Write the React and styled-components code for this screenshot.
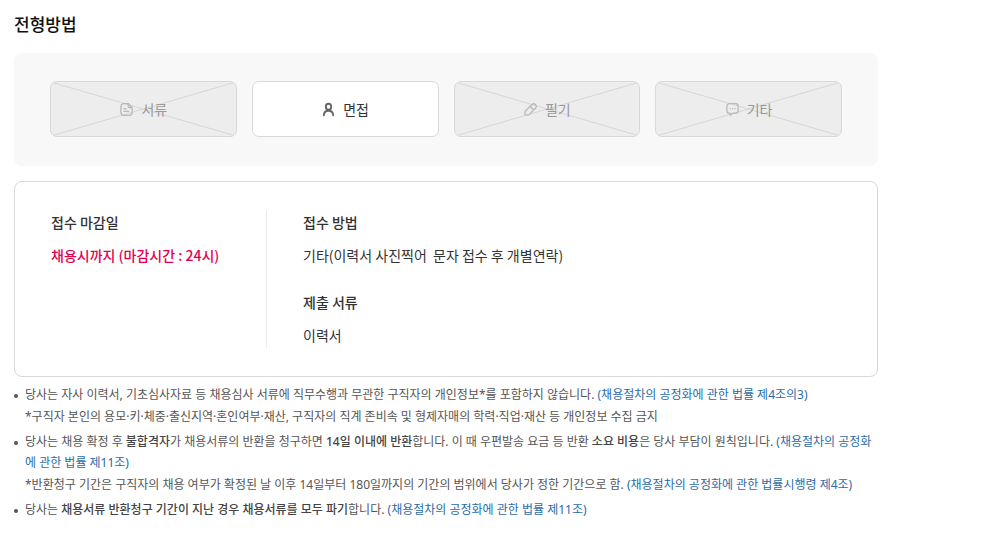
import React from "react";
import styled, { createGlobalStyle } from "styled-components";

const GlobalStyle = createGlobalStyle`
  *, *::before, *::after { box-sizing: border-box; }
  body {
    margin: 0;
    background: #fff;
    color: #333;
    font-family: "Noto Sans CJK KR", "Noto Sans", sans-serif;
    font-size: 14px;
  }
  h2, h3, p, ul { margin: 0; padding: 0; }
  ul { list-style: none; }
`;

const Section = styled.section`
  padding: 12px 108px 0 14px;
`;

const Title = styled.h2`
  margin-bottom: 17px;
  font-size: 17px;
  font-weight: 500;
  line-height: 24px;
  color: #111;
`;

const StepList = styled.ul`
  display: grid;
  grid-template-columns: repeat(4, 1fr);
  gap: 15px;
  padding: 28px 36px 29px;
  border-radius: 8px;
  background: #f8f8f8;
`;

const Step = styled.li`
  position: relative;
  display: flex;
  align-items: center;
  justify-content: center;
  gap: 7px;
  height: 56px;
  overflow: hidden;
  border: 1px solid ${({ $active }) => ($active ? "#d9d9d9" : "#d8d8d8")};
  border-radius: 7px;
  background: ${({ $active }) => ($active ? "#fff" : "#ededed")};
  color: ${({ $active }) => ($active ? "#333" : "#999")};
`;

const Cross = styled.svg`
  position: absolute;
  inset: 0;
  width: 100%;
  height: 100%;
  stroke: #d6d6d6;
`;

const Icon = styled.svg`
  position: relative;
  flex: none;
  width: 15px;
  height: 15px;
  fill: none;
  stroke: ${({ $active }) => ($active ? "#666" : "#b9b9b9")};
  stroke-width: ${({ $active }) => ($active ? 2 : 1.4)};
  stroke-linecap: round;
  stroke-linejoin: round;
`;

const StepLabel = styled.span`
  position: relative;
  line-height: 20px;
`;

const InfoBox = styled.div`
  display: flex;
  margin-top: 15px;
  padding: 28px 36px;
  border: 1px solid #d9d9d9;
  border-radius: 8px;
`;

const InfoColumn = styled.div`
  display: flex;
  flex-direction: column;
  gap: 22px;

  &:first-child {
    flex: 0 0 216px;
    border-right: 1px solid #ebebeb;
  }

  &:last-child {
    flex: 1;
    padding-left: 36px;
  }
`;

const InfoTitle = styled.h3`
  margin-bottom: 8px;
  font-size: 14px;
  font-weight: 500;
  line-height: 25px;
`;

const InfoText = styled.p`
  font-size: 14px;
  font-weight: ${({ $deadline }) => ($deadline ? 500 : 400)};
  line-height: 25px;
  white-space: pre-wrap;
  color: ${({ $deadline }) => ($deadline ? "#e3004f" : "#333")};
`;

const Notes = styled.ul`
  display: flex;
  flex-direction: column;
  gap: 4px;
  margin-top: 7px;
  font-family: "Noto Sans", "Noto Sans CJK KR", sans-serif;
  font-size: 12px;
  line-height: 21px;
  color: #555;
`;

const Note = styled.li`
  display: flex;
  gap: 7px;
  word-break: break-all;

  &::before {
    content: "";
    flex: none;
    width: 4px;
    height: 4px;
    margin-top: 10px;
    border-radius: 50%;
    background: #555;
  }

  b { font-weight: 500; color: #444; }
`;

const SubNote = styled.p`
  margin-top: 1px;
`;

const LawLink = styled.a`
  color: #2a6ba8;
  text-decoration: none;
`;

const icons = {
  document: (
    <>
      <path d="M10 1.8H5.2A3.2 3.2 0 0 0 2 5v6a3.2 3.2 0 0 0 3.2 3.2h5.6A3.2 3.2 0 0 0 14 11V5.8z" />
      <path d="M9.8 2v2.2a1.7 1.7 0 0 0 1.7 1.7h2.3M5.4 7.2h2M5.4 10h4.8" />
    </>
  ),
  person: (
    <>
      <ellipse cx="8" cy="5" rx="2.9" ry="3.1" />
      <path d="M3 14.2C3.2 11.2 5.2 9.3 8 9.3s4.8 1.9 5 4.9" />
    </>
  ),
  pencil: (
    <>
      <path d="M2.2 13.8 2 11.4c0-.8.3-1.5.8-2l6.9-6.7a2.5 2.5 0 0 1 3.5 0l.3.3a2.4 2.4 0 0 1 0 3.4l-6.8 6.8c-.5.5-1.2.8-1.9.8z" />
      <path d="M8.3 4.3c.1 2 1.4 3.3 3.4 3.6" />
    </>
  ),
  chat: (
    <>
      <path d="M4.7 1.8h6.6A2.7 2.7 0 0 1 14 4.5v4.7a2.7 2.7 0 0 1-2.7 2.7H8.6L5.4 14v-2.1h-.7A2.7 2.7 0 0 1 2 9.2V4.5a2.7 2.7 0 0 1 2.7-2.7z" />
      <path d="M5.4 7.2h.1M8 7.2h.1M10.6 7.2h.1" />
    </>
  ),
};

const steps = [
  { icon: "document", label: "서류" },
  { icon: "person", label: "면접", active: true },
  { icon: "pencil", label: "필기" },
  { icon: "chat", label: "기타" },
];

export default function App() {
  return (
    <>
      <GlobalStyle />
      <Section>
        <Title>전형방법</Title>
        <StepList>
          {steps.map(({ icon, label, active }) => (
            <Step key={label} $active={active}>
              {!active && (
                <Cross aria-hidden="true">
                  <line x1="0" y1="0" x2="100%" y2="100%" />
                  <line x1="0" y1="100%" x2="100%" y2="0" />
                </Cross>
              )}
              <Icon $active={active} viewBox="0 0 16 16" aria-hidden="true">
                {icons[icon]}
              </Icon>
              <StepLabel>{label}</StepLabel>
            </Step>
          ))}
        </StepList>

        <InfoBox>
          <InfoColumn>
            <div>
              <InfoTitle>접수 마감일</InfoTitle>
              <InfoText $deadline>채용시까지 (마감시간 : 24시)</InfoText>
            </div>
          </InfoColumn>
          <InfoColumn>
            <div>
              <InfoTitle>접수 방법</InfoTitle>
              <InfoText>{"기타(이력서 사진찍어  문자 접수 후 개별연락)"}</InfoText>
            </div>
            <div>
              <InfoTitle>제출 서류</InfoTitle>
              <InfoText>이력서</InfoText>
            </div>
          </InfoColumn>
        </InfoBox>

        <Notes>
          <Note>
            <div>
              <p>
                당사는 자사 이력서, 기초심사자료 등 채용심사 서류에 직무수행과 무관한 구직자의 개인정보*를 포함하지
                않습니다. <LawLink href="#law-4-3">(채용절차의 공정화에 관한 법률 제4조의3)</LawLink>
              </p>
              <SubNote>
                *구직자 본인의 용모·키·체중·출신지역·혼인여부·재산, 구직자의 직계 존비속 및 형제자매의 학력·직업·재산 등
                개인정보 수집 금지
              </SubNote>
            </div>
          </Note>
          <Note>
            <div>
              <p>
                당사는 채용 확정 후 <b>불합격자</b>가 채용서류의 반환을 청구하면 <b>14일 이내에 반환</b>합니다. 이 때
                우편발송 요금 등 반환 <b>소요 비용</b>은 당사 부담이 원칙입니다.{" "}
                <LawLink href="#law-11">(채용절차의 공정화에 관한 법률 제11조)</LawLink>
              </p>
              <SubNote>
                *반환청구 기간은 구직자의 채용 여부가 확정된 날 이후 14일부터 180일까지의 기간의 범위에서 당사가 정한
                기간으로 함. <LawLink href="#decree-4">(채용절차의 공정화에 관한 법률시행령 제4조)</LawLink>
              </SubNote>
            </div>
          </Note>
          <Note>
            <p>
              당사는 <b>채용서류 반환청구 기간이 지난 경우 채용서류를 모두 파기</b>합니다.{" "}
              <LawLink href="#law-11">(채용절차의 공정화에 관한 법률 제11조)</LawLink>
            </p>
          </Note>
        </Notes>
      </Section>
    </>
  );
}
